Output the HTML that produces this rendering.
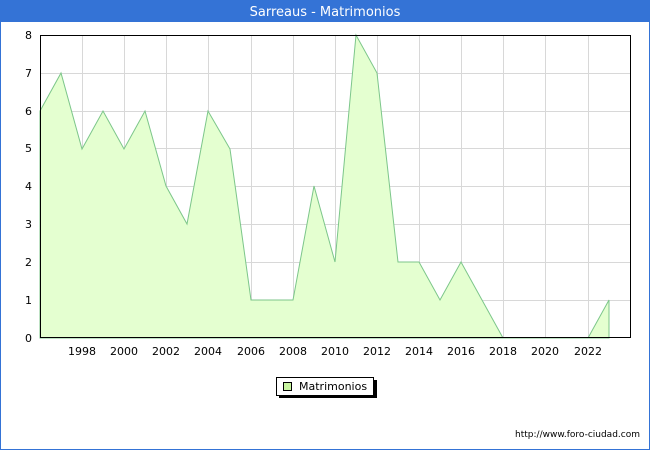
<!DOCTYPE html>
<html><head><style>
body{margin:0;width:650px;height:450px;overflow:hidden;background:#fff;font-family:"DejaVu Sans","Liberation Sans",sans-serif}
</style></head><body>
<svg width="650" height="450" xmlns="http://www.w3.org/2000/svg" font-family="DejaVu Sans, Liberation Sans, sans-serif">
<rect x="0.5" y="0.5" width="649" height="449" fill="#fff" stroke="#3473d6"/>
<rect x="0" y="0" width="650" height="22" fill="#3473d6"/>
<text x="325" y="16" fill="#fff" font-size="13" text-anchor="middle">Sarreaus - Matrimonios</text>
<g stroke="#d8d8d8" stroke-width="1">
<line x1="40" y1="300.5" x2="631" y2="300.5"/><line x1="40" y1="262.5" x2="631" y2="262.5"/><line x1="40" y1="224.5" x2="631" y2="224.5"/><line x1="40" y1="186.5" x2="631" y2="186.5"/><line x1="40" y1="148.5" x2="631" y2="148.5"/><line x1="40" y1="111.5" x2="631" y2="111.5"/><line x1="40" y1="73.5" x2="631" y2="73.5"/>
<line x1="82.5" y1="35" x2="82.5" y2="338"/><line x1="124.5" y1="35" x2="124.5" y2="338"/><line x1="166.5" y1="35" x2="166.5" y2="338"/><line x1="208.5" y1="35" x2="208.5" y2="338"/><line x1="251.5" y1="35" x2="251.5" y2="338"/><line x1="293.5" y1="35" x2="293.5" y2="338"/><line x1="335.5" y1="35" x2="335.5" y2="338"/><line x1="377.5" y1="35" x2="377.5" y2="338"/><line x1="419.5" y1="35" x2="419.5" y2="338"/><line x1="461.5" y1="35" x2="461.5" y2="338"/><line x1="503.5" y1="35" x2="503.5" y2="338"/><line x1="545.5" y1="35" x2="545.5" y2="338"/><line x1="588.5" y1="35" x2="588.5" y2="338"/>
</g>
<polygon fill="#e4ffd0" stroke="#7cc68a" stroke-width="1" points="40,338 40,111 61,73 82,149 103,111 124,149 145,111 166,186 187,224 208,111 230,149 251,300 272,300 293,300 314,186 335,262 356,35 377,73 398,262 419,262 440,300 461,262 482,300 503,338 524,338 545,338 566,338 588,338 609,300 609,338"/>
<rect x="40.5" y="35.5" width="590" height="302" fill="none" stroke="#000"/>
<g font-size="11" fill="#000" text-anchor="end">
<text x="32" y="342">0</text><text x="32" y="304">1</text><text x="32" y="266">2</text><text x="32" y="228">3</text><text x="32" y="190">4</text><text x="32" y="152">5</text><text x="32" y="115">6</text><text x="32" y="77">7</text><text x="32" y="39">8</text>
</g>
<g font-size="11" fill="#000" text-anchor="middle">
<text x="82" y="355">1998</text><text x="124" y="355">2000</text><text x="166" y="355">2002</text><text x="208" y="355">2004</text><text x="251" y="355">2006</text><text x="293" y="355">2008</text><text x="335" y="355">2010</text><text x="377" y="355">2012</text><text x="419" y="355">2014</text><text x="461" y="355">2016</text><text x="503" y="355">2018</text><text x="545" y="355">2020</text><text x="588" y="355">2022</text>
</g>
<rect x="279" y="380" width="98" height="18" fill="#000"/>
<rect x="276.5" y="377.5" width="97" height="18" fill="#fff" stroke="#000"/>
<rect x="283.5" y="382.5" width="8" height="8" fill="#c8f5a0" stroke="#000"/>
<text x="299" y="390" font-size="11">Matrimonios</text>
<text x="640" y="437" font-size="9" text-anchor="end">http://www.foro-ciudad.com</text>
</svg>
</body></html>
